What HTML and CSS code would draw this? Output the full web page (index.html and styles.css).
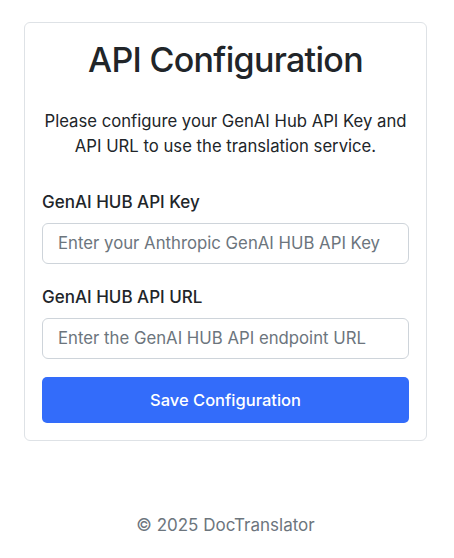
FILE: index.html
```html
<!DOCTYPE html>
<html lang="en">
<head>
<meta charset="utf-8">
<title>API Configuration</title>
<link rel="stylesheet" href="styles.css">
</head>
<body>
<main class="page">
  <section class="card">
    <h1 class="title">API Configuration</h1>
    <p class="intro">Please configure your GenAI Hub API Key and API URL to use the translation service.</p>
    <form class="form">
      <label class="label" for="key">GenAI HUB API Key</label>
      <input class="input" id="key" type="text" placeholder="Enter your Anthropic GenAI HUB API Key">
      <label class="label label-second" for="url">GenAI HUB API URL</label>
      <input class="input" id="url" type="text" placeholder="Enter the GenAI HUB API endpoint URL">
      <button class="btn" type="button">Save Configuration</button>
    </form>
  </section>
  <footer class="footer">© 2025 DocTranslator</footer>
</main>
</body>
</html>
```
FILE: styles.css
```css
* { box-sizing: border-box; }
html, body { margin: 0; padding: 0; background: #fff; }
body {
  font-family: Inter, "Noto Sans", sans-serif;
  color: #212529;
  font-size: 16.5px;
}
.page {
  display: flex;
  flex-direction: column;
  padding: 22px 27px 0 24px;
}
.card {
  border: 1px solid #dee2e6;
  border-radius: 6px;
  padding: 17px;
}
.title {
  margin: 0;
  font-size: 34px;
  line-height: 1.2;
  font-weight: 500;
  letter-spacing: -0.7px;
  text-align: center;
}
.intro {
  margin: 28px 0 0;
  font-size: 16.7px;
  line-height: 25.5px;
  text-align: center;
}
.form {
  display: flex;
  flex-direction: column;
  margin-top: 30px;
}
.label {
  font-size: 17px;
  line-height: 24px;
  font-weight: 500;
  margin-bottom: 9px;
}
.label-second { margin-top: 21px; }
.input {
  height: 41px;
  border: 1px solid #ced4da;
  border-radius: 6px;
  padding: 0 15px;
  font: inherit;
  font-size: 16.75px;
  color: #212529;
}
.input::placeholder { color: #6c757d; }
.btn {
  margin-top: 18px;
  height: 46px;
  border: 0;
  border-radius: 5px;
  background: #336cfa;
  color: #fff;
  font: inherit;
  font-size: 16.5px;
  font-weight: 500;
}
.footer {
  margin-top: 72px;
  text-align: center;
  color: #6c757d;
  font-size: 17px;
  line-height: 24px;
}
```
